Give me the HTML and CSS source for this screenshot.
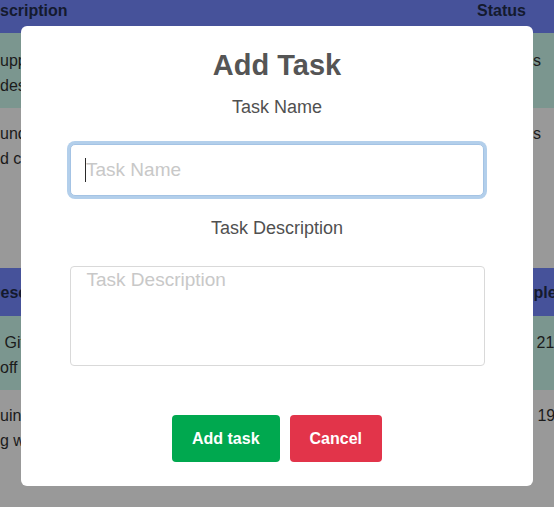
FILE: index.html
```html
<!DOCTYPE html>
<html lang="en">
<head>
<meta charset="utf-8">
<title>Add Task</title>
<link rel="stylesheet" href="styles.css">
</head>
<body>
<div class="page">
  <section class="table table-first">
    <div class="row head head-cut">
      <div class="cell">scription</div>
      <div class="cell">Status</div>
    </div>
    <div class="row teal row-a">
      <div class="cell">upport for dark mode in the dashboard<br>design system tokens and theme</div>
      <div class="cell">Progress</div>
    </div>
    <div class="row gray row-b">
      <div class="cell">undle size optimisation for the app<br>d code splitting on routes</div>
      <div class="cell">Progress</div>
    </div>
  </section>
  <section class="table table-second">
    <div class="row head head-full">
      <div class="cell shifted">Description</div>
      <div class="cell shifted-small">Completed</div>
    </div>
    <div class="row teal row-c">
      <div class="cell">&nbsp;Git hooks for linting commits<br>off the main branch</div>
      <div class="cell">Mar. 21, 2023</div>
    </div>
    <div class="row gray row-d">
      <div class="cell">uine build pipeline caching<br>g with artifacts</div>
      <div class="cell">Feb. 19, 2023</div>
    </div>
  </section>
</div>

<div class="overlay">
  <form class="modal">
    <h2 class="modal-title">Add Task</h2>
    <label class="field-label" for="task-name">Task Name</label>
    <div class="input-wrap">
      <input id="task-name" class="text-input" type="text" placeholder="Task Name">
      <span class="caret"></span>
    </div>
    <label class="field-label field-label-second" for="task-desc">Task Description</label>
    <textarea id="task-desc" class="text-area" placeholder="Task Description"></textarea>
    <div class="actions">
      <button type="button" class="btn btn-add">Add task</button>
      <button type="button" class="btn btn-cancel">Cancel</button>
    </div>
  </form>
</div>
</body>
</html>
```
FILE: styles.css
```css
html, body {
  margin: 0;
  padding: 0;
  overflow: hidden;
  background: #999999;
  font-family: "Liberation Sans", Arial, Helvetica, sans-serif;
}

.page {
  width: 554px;
  height: 507px;
  overflow: hidden;
}

.table {
  display: grid;
  width: 554px;
}

.table-first .row {
  grid-template-columns: 477px 1fr;
}

.table-second .row {
  grid-template-columns: 501px 1fr;
}

.row {
  display: grid;
  font-size: 16px;
  line-height: 25px;
  color: #1b1b1b;
}

.cell {
  white-space: nowrap;
  overflow: hidden;
}

.head {
  background: #46529a;
  color: #141a2e;
  font-weight: bold;
}

.head-cut {
  height: 33px;
  line-height: 22px;
}

.head-full {
  height: 48px;
  align-items: center;
}

.shifted {
  text-indent: -11px;
}

.shifted-small {
  text-indent: -3px;
}

.teal {
  background: #7b968f;
}

.gray {
  background: #999999;
}

.row-a, .row-b, .row-c, .row-d {
  box-sizing: border-box;
  padding-top: 15px;
}

.row-a { height: 75px; }
.row-b { height: 160px; padding-top: 13px; }
.row-c { height: 74px; padding-top: 14px; }
.row-d { height: 130px; padding-top: 13px; }

.overlay {
  position: fixed;
  inset: 0;
  display: flex;
  justify-content: center;
  align-items: flex-start;
  padding-top: 26px;
}

.modal {
  width: 512px;
  height: 460px;
  box-sizing: border-box;
  background: #ffffff;
  border-radius: 6px;
  padding-top: 22px;
  display: flex;
  flex-direction: column;
  align-items: center;
}

.modal-title {
  margin: 0;
  font-size: 29px;
  line-height: 34px;
  font-weight: bold;
  color: #555555;
}

.field-label {
  margin-top: 14px;
  font-size: 18px;
  line-height: 22px;
  color: #505050;
}

.field-label-second {
  margin-top: 21px;
}

.input-wrap {
  position: relative;
  margin-top: 26px;
}

.text-input {
  display: block;
  width: 414px;
  height: 52px;
  box-sizing: border-box;
  border: 1px solid #a4c3e4;
  box-shadow: 0 0 0 3px #b3cfeb;
  border-radius: 5px;
  padding: 0 15px;
  font-family: inherit;
  font-size: 19px;
  color: #333;
  outline: none;
  background: #fff;
}

.text-input::placeholder,
.text-area::placeholder {
  color: #c8c8c8;
}

.caret {
  position: absolute;
  left: 15px;
  top: 14px;
  width: 1px;
  height: 24px;
  background: #2a2a2a;
}

.text-area {
  display: block;
  margin-top: 27px;
  width: 415px;
  height: 100px;
  box-sizing: border-box;
  border: 1px solid #d9d9d9;
  border-radius: 4px;
  padding: 2px 16px;
  font-family: inherit;
  font-size: 19px;
  resize: none;
  outline: none;
}

.actions {
  display: flex;
  gap: 10px;
  margin-top: 49px;
}

.btn {
  height: 47px;
  padding: 0 20px;
  border: 0;
  border-radius: 4px;
  font-family: inherit;
  font-size: 16px;
  font-weight: bold;
  color: #ffffff;
}

.btn-add {
  background: #00a84f;
}

.btn-cancel {
  background: #e2344a;
}
```
